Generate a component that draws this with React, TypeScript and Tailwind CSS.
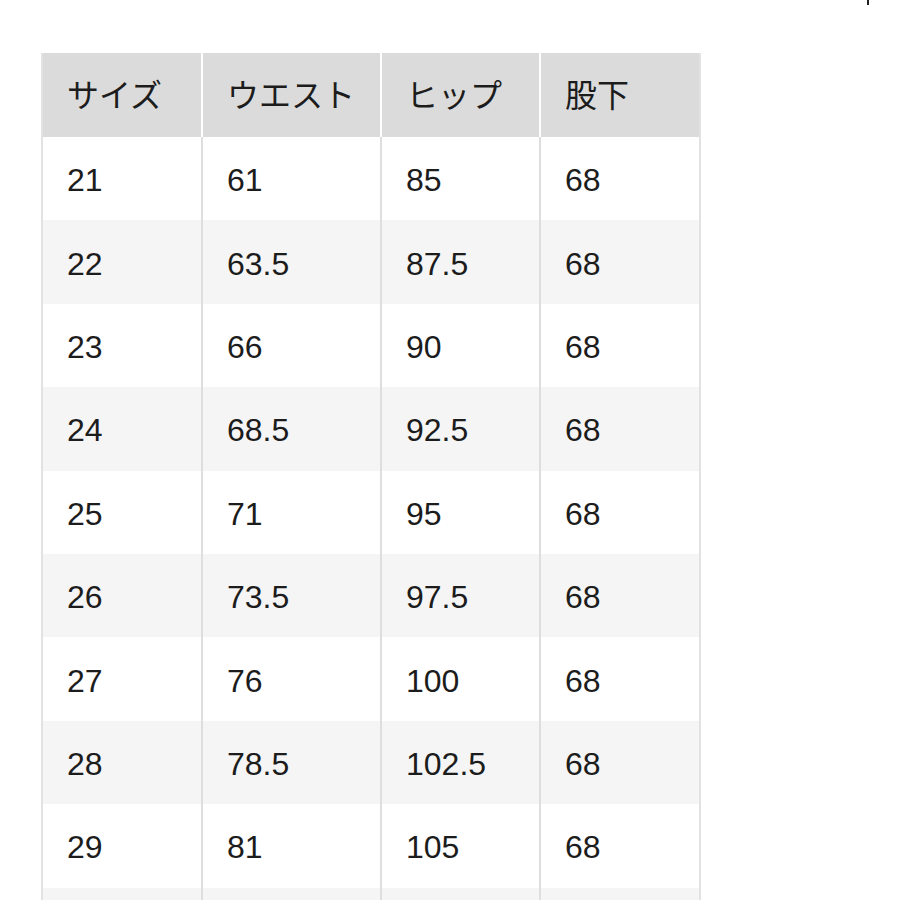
import React, { FC } from 'react';

const rows: string[][] = [
	['21', '61', '85', '68'],
	['22', '63.5', '87.5', '68'],
	['23', '66', '90', '68'],
	['24', '68.5', '92.5', '68'],
	['25', '71', '95', '68'],
	['26', '73.5', '97.5', '68'],
	['27', '76', '100', '68'],
	['28', '78.5', '102.5', '68'],
	['29', '81', '105', '68'],
	// next row is cut by the bottom of the screenshot
	['', '', '', ''],
];

const headers = ['サイズ', 'ウエスト', 'ヒップ', '股下'];
const widths = ['w-[160px]', 'w-[179px]', 'w-[159px]', 'w-[160px]'];

const App: FC = () => {
	return (
		<div
			className="relative h-[900px] w-[900px] overflow-hidden bg-white pt-[53px] pl-[41px] text-[#1c1c1c]"
			style={{ fontFamily: '"Liberation Sans", "Noto Sans CJK JP", sans-serif' }}
		>
			{/* tiny mark at the top right edge */}
			<div className="absolute top-0 left-[867px] h-[5px] w-[2px] bg-[#222]" />

			<table className="table-fixed border-collapse border-x-2 border-[#e2e2e2]">
				<thead>
					<tr className="h-[84px] bg-[#dbdbdb]">
						{headers.map((h, i) => (
							<th
								key={h}
								className={`${widths[i]} border-l-2 border-white px-[24px] pt-[2px] text-left align-middle text-[32px] font-normal first:border-l-0`}
							>
								{h}
							</th>
						))}
					</tr>
				</thead>
				<tbody>
					{rows.map((r, ri) => (
						<tr key={ri} className={`h-[83.4px] ${ri % 2 === 1 ? 'bg-[#f5f5f5]' : 'bg-white'}`}>
							{r.map((c, ci) => (
								<td
									key={ci}
									className="border-l-2 border-[#dedede] px-[24px] pt-[3px] align-middle text-[32px] first:border-l-0"
								>
									{c}
								</td>
							))}
						</tr>
					))}
				</tbody>
			</table>
		</div>
	);
};

export default App;
